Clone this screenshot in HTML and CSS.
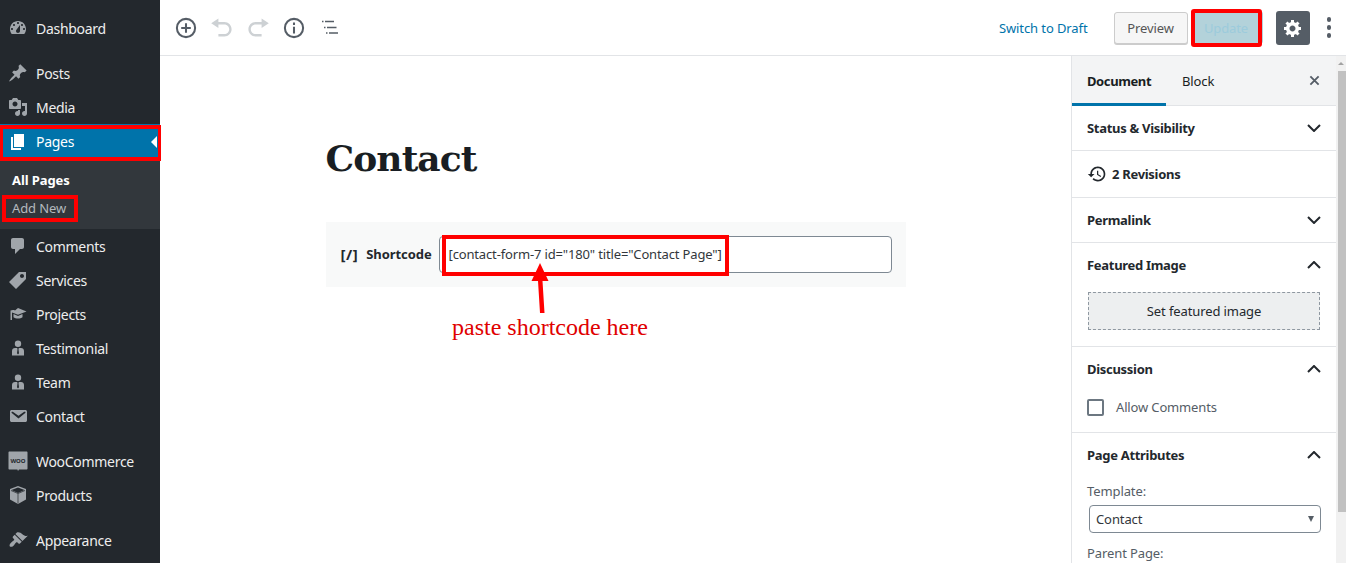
FILE: index.html
```html
<!DOCTYPE html>
<html lang="en">
<head>
<meta charset="utf-8">
<title>Edit Page: Contact</title>
<link rel="stylesheet" href="styles.css">
</head>
<body>
<div class="app">
  <nav class="side">
    <a class="item"><svg class="ic" viewBox="0 0 20 20"><path fill-rule="evenodd" d="M3.76 16h12.48c1.1-1.37 1.76-3.11 1.76-5 0-4.42-3.58-8-8-8s-8 3.58-8 8c0 1.89.66 3.63 1.76 5zM10 4c.55 0 1 .45 1 1s-.45 1-1 1-1-.45-1-1 .45-1 1-1zM6 6c.55 0 1 .45 1 1s-.45 1-1 1-1-.45-1-1 .45-1 1-1zm8 0c.55 0 1 .45 1 1s-.45 1-1 1-1-.45-1-1 .45-1 1-1zm-5.37 5.55L12 7v6c0 1.1-.9 2-2 2s-2-.9-2-2c0-.57.24-1.08.63-1.45zM4 10c.55 0 1 .45 1 1s-.45 1-1 1-1-.45-1-1 .45-1 1-1zm12 0c.55 0 1 .45 1 1s-.45 1-1 1-1-.45-1-1 .45-1 1-1z"/></svg><span>Dashboard</span></a>
    <div class="sep"></div>
    <a class="item"><svg class="ic" viewBox="0 0 20 20"><path d="M10.44 3.02l1.82-1.82 6.36 6.35-1.83 1.82c-1.05-.68-2.48-.57-3.41.36l-.75.75c-.92.93-1.04 2.35-.35 3.41l-1.83 1.82-2.41-2.41-2.8 2.79c-.42.42-3.38 2.71-3.8 2.29s1.86-3.39 2.28-3.81l2.79-2.79L4.1 9.36l1.83-1.82c1.05.69 2.48.57 3.4-.36l.75-.75c.93-.92 1.05-2.35.36-3.41z"/></svg><span>Posts</span></a>
    <a class="item"><svg class="ic" viewBox="0 0 20 20"><path fill-rule="evenodd" d="M13 11V4c0-.55-.45-1-1-1h-1.67L9 1H5L3.67 3H2c-.55 0-1 .45-1 1v7c0 .55.45 1 1 1h10c.55 0 1-.45 1-1zM7 4.5c1.38 0 2.5 1.12 2.5 2.5S8.38 9.5 7 9.5 4.5 8.38 4.5 7 5.62 4.5 7 4.5zM14 6h5v10.5c0 1.38-1.12 2.5-2.5 2.5S14 17.88 14 16.5s1.12-2.5 2.5-2.5c.17 0 .34.02.5.05V9h-3V6zm-4 8.05V13h2v3.5c0 1.38-1.12 2.5-2.5 2.5S7 17.88 7 16.5 8.12 14 9.5 14c.17 0 .34.02.5.05z"/></svg><span>Media</span></a>
    <a class="item current"><svg class="ic" viewBox="0 0 20 20"><path d="M6 15V2h10v13H6zm-1 1h8v2H3V5h2v11z"/></svg><span>Pages</span><i class="notch"></i></a>
    <div class="sub">
      <a class="subitem strong">All Pages</a>
      <a class="subitem">Add New</a>
    </div>
    <a class="item"><svg class="ic" viewBox="0 0 20 20"><path d="M5 2h9c1.1 0 2 .9 2 2v7c0 1.1-.9 2-2 2h-2l-5 5v-5H5c-1.1 0-2-.9-2-2V4c0-1.1.9-2 2-2z"/></svg><span>Comments</span></a>
    <a class="item"><svg class="ic" viewBox="0 0 20 20"><path fill-rule="evenodd" d="M11 2h7v7L8 19l-7-7zm3 6c1.1 0 2-.9 2-2s-.9-2-2-2-2 .9-2 2 .9 2 2 2z"/></svg><span>Services</span></a>
    <a class="item"><svg class="ic" viewBox="0 0 20 20"><path d="M10 4l8.5 3.4L10 10.8 4 8.4V16H2.5V6.6c1.5-.8 3.300-.6 4.500-.2zM5.500 10l4.500 1.900 4.500-1.900v3.300c-2 1.700-7 1.700-9 0z"/></svg><span>Projects</span></a>
    <a class="item"><svg class="ic" viewBox="0 0 20 20"><path fill-rule="evenodd" d="M10 2.500a3.200 3.200 0 1 1 0 6.400 3.200 3.200 0 0 1 0-6.400zM7 10h6c1.800 0 3 1.300 3 3v4.500H4V13c0-1.700 1.200-3 3-3zM9.200 10l.3 1.200-.5 4 1 1.400 1-1.400-.5-4 .3-1.200z"/></svg><span>Testimonial</span></a>
    <a class="item"><svg class="ic" viewBox="0 0 20 20"><path fill-rule="evenodd" d="M10 2.500a3.200 3.200 0 1 1 0 6.400 3.200 3.200 0 0 1 0-6.400zM7 10h6c1.800 0 3 1.300 3 3v4.500H4V13c0-1.700 1.200-3 3-3zM9.200 10l.3 1.200-.5 4 1 1.400 1-1.400-.5-4 .3-1.200z"/></svg><span>Team</span></a>
    <a class="item"><svg class="ic" viewBox="0 0 20 20"><path d="M3.870 4h13.250C18.370 4 19 4.590 19 5.790v8.420c0 1.190-.63 1.790-1.880 1.790H3.870c-1.250 0-1.880-.6-1.880-1.790V5.790c0-1.200.63-1.790 1.880-1.790zm6.620 8.600l6.740-5.530c.24-.2.43-.66.13-1.070-.29-.41-.82-.42-1.170-.17l-5.700 3.860L4.800 5.830c-.35-.25-.88-.24-1.170.17-.3.41-.11.87.13 1.070z"/></svg><span>Contact</span></a>
    <div class="sep"></div>
    <a class="item"><svg class="ic woo" viewBox="0 0 20 20"><path d="M1.500 .5h17c.6 0 1 .4 1 1v16c0 .6-.4 1-1 1h-7.500l-1 1.500-.6-1.500H1.500c-.6 0-1-.4-1-1v-16c0-.6.4-1 1-1z"/><text class="wootext" x="10" y="11.500">WOO</text></svg><span>WooCommerce</span></a>
    <a class="item"><svg class="ic" viewBox="0 0 20 20"><path d="M10 1l8 3v10.500L10 19l-8-4.500V4zM3.500 5l6.500 3 6.500-3L10 2.600z"/><path class="boxline" d="M3 5.500l7 3 7-3M10 8.500v10"/></svg><span>Products</span></a>
    <div class="sep"></div>
    <a class="item"><svg class="ic" viewBox="0 0 20 20"><path d="M14.480 11.060L7.410 3.990l1.500-1.500c.5-.56 2.300-.47 3.510.32 1.210.8 1.430 1.280 2.910 2.100 1.180.64 2.450 1.260 4.450.85zm-.71.710L6.700 4.700 4.930 6.470c-.39.39-.39 1.020 0 1.410l1.060 1.060c.39.39.39 1.030 0 1.420-.6.6-1.430 1.110-2.210 1.690-.35.26-.7.53-1.010.84-1.430 1.430-1.400 2.970-.82 3.570.58.58 2.130.61 3.560-.82.31-.31.58-.66.84-1.010.58-.78 1.090-1.610 1.690-2.210.39-.39 1.030-.39 1.420 0l1.060 1.060c.39.39 1.020.39 1.410 0z"/></svg><span>Appearance</span></a>
  </nav>

  <div class="main">
    <header class="top">
      <div class="tools">
        <svg class="tool plus" viewBox="0 0 20 20"><circle cx="10" cy="10" r="7.600"/><path d="M10 6v8M6 10h8"/></svg>
        <svg class="tool dim" viewBox="0 0 20 20"><path d="M12 5H7V2L1 6l6 4V7h5c2.200 0 4 1.800 4 4s-1.800 4-4 4H7v2h5c3.300 0 6-2.700 6-6s-2.700-6-6-6z"/></svg>
        <svg class="tool dim" viewBox="0 0 20 20"><path d="M8 5h5V2l6 4-6 4V7H8c-2.200 0-4 1.800-4 4s1.800 4 4 4h5v2H8c-3.300 0-6-2.700-6-6s2.700-6 6-6z"/></svg>
        <svg class="tool plus" viewBox="0 0 20 20"><circle cx="10" cy="10" r="7.600"/><path d="M10 9v5.500M10 5.500v2"/></svg>
        <svg class="tool toc" viewBox="0 0 20 20"><path d="M3 3.500h1.500M6 3.500h9M5 9.500h1.500M8 9.500h9.500M7 15h1.500M10 15h9"/></svg>
      </div>
      <a class="draft">Switch to Draft</a>
      <button class="btn preview">Preview</button>
      <button class="btn update">Update</button>
      <button class="gear"><svg viewBox="0 0 20 20"><path fill-rule="evenodd" d="M18 12h-2.180c-.17.7-.44 1.350-.81 1.930l1.540 1.540-2.100 2.100-1.540-1.540c-.58.36-1.230.63-1.910.79V19H8v-2.180c-.68-.16-1.330-.43-1.910-.79l-1.540 1.540-2.120-2.120 1.540-1.540c-.36-.58-.63-1.230-.79-1.910H1V9.030h2.170c.16-.7.44-1.350.8-1.940L2.430 5.550l2.100-2.100 1.540 1.540c.58-.37 1.240-.64 1.930-.81V2h3v2.180c.68.16 1.330.43 1.910.79l1.540-1.540 2.120 2.120-1.540 1.540c.36.59.64 1.240.8 1.940H18V12zm-8.500 1.500c1.660 0 3-1.340 3-3s-1.340-3-3-3-3 1.340-3 3 1.340 3 3 3z"/></svg></button>
      <div class="more"><i></i><i></i><i></i></div>
    </header>
    <div class="body">
      <main class="editor">
        <h1 class="title">Contact</h1>
        <div class="block">
          <div class="blocklabel"><b class="bracket">[/]</b><b>Shortcode</b></div>
          <div class="field">[contact-form-7 id="180" title="Contact Page"]</div>
        </div>
      </main>
      <aside class="panel">
        <div class="tabs">
          <a class="tab on">Document</a>
          <a class="tab">Block</a>
          <svg class="close" viewBox="0 0 12 12"><path d="M1.500 1.500l9 9M10.500 1.500l-9 9"/></svg>
        </div>
        <section class="row status"><h2>Status &amp; Visibility</h2><svg class="chev" viewBox="0 0 14 8"><path d="M1 1l6 6 6-6"/></svg></section>
        <section class="row rev"><svg class="hist" viewBox="0 0 24 24"><path d="M13 3c-4.970 0-9 4.030-9 9H1l3.890 3.890.07.14L9 12H6c0-3.870 3.130-7 7-7s7 3.130 7 7-3.130 7-7 7c-1.930 0-3.680-.79-4.940-2.060l-1.420 1.420C8.270 19.990 10.510 21 13 21c4.970 0 9-4.030 9-9s-4.030-9-9-9zm-1 5v5l4.280 2.540.72-1.210-3.500-2.080V8H12z"/></svg><h2>2 Revisions</h2></section>
        <section class="row perma"><h2>Permalink</h2><svg class="chev" viewBox="0 0 14 8"><path d="M1 1l6 6 6-6"/></svg></section>
        <section class="group feat">
          <div class="ghead"><h2>Featured Image</h2><svg class="chev" viewBox="0 0 14 8"><path d="M1 7l6-6 6 6"/></svg></div>
          <button class="setimg">Set featured image</button>
        </section>
        <section class="group disc">
          <div class="ghead"><h2>Discussion</h2><svg class="chev" viewBox="0 0 14 8"><path d="M1 7l6-6 6 6"/></svg></div>
          <label class="check"><i class="box"></i><span>Allow Comments</span></label>
        </section>
        <section class="group attr">
          <div class="ghead"><h2>Page Attributes</h2><svg class="chev" viewBox="0 0 14 8"><path d="M1 7l6-6 6 6"/></svg></div>
          <div class="lbl">Template:</div>
          <div class="select"><span>Contact</span><i class="caret"></i></div>
          <div class="lbl parent">Parent Page:</div>
        </section>
      </aside>
      <div class="scroll"><i class="up"></i><i class="thumb"></i></div>
    </div>
  </div>
</div>

<div class="mark m-pages"></div>
<div class="mark m-add"></div>
<div class="mark m-update"></div>
<div class="mark m-field"></div>
<svg class="arrow" viewBox="0 0 40 60"><path d="M19 6l8.500 18h-6l2 32h-4.500L17 24h-6.500z"/></svg>
<div class="note">paste shortcode here</div>
</body>
</html>
```
FILE: styles.css
```css
* { box-sizing: border-box; }
html, body { margin: 0; height: 563px; overflow: hidden; background: #fff; }
body { font-family: "Noto Sans", sans-serif; font-size: 13px; color: #191e23; position: relative; }
h1, h2 { margin: 0; }
.app { display: grid; grid-template-columns: 160px 1fr; height: 563px; }

.side { background: #23282d; padding-top: 11px; overflow: hidden; }
.sep { height: 11px; }
.item { display: flex; align-items: center; height: 34px; color: #eee; font-size: 14px; letter-spacing: -.3px; }
.item span { margin-left: 8px; }
.ic { width: 20px; height: 20px; margin-left: 8px; fill: #a0a5aa; flex: none; }
.woo { margin-left: 8px; }
.wootext { font-family: "Noto Sans", sans-serif; font-size: 6px; font-weight: 700; fill: #23282d; text-anchor: middle; letter-spacing: 0; }
.boxline { fill: none; stroke: #23282d; stroke-width: .7; }
.current { background: #0073aa; color: #fff; height: 35px; position: relative; }
.current .ic { fill: #fff; }
.notch { position: absolute; right: 3px; top: 12px; border: 6px solid transparent; border-right-color: #fff; border-left-width: 0; }
.sub { background: #32373c; height: 70px; padding-top: 7px; }
.subitem { display: flex; align-items: center; height: 28px; padding-left: 12px; color: #b4b9be; font-size: 13px; letter-spacing: -.1px; }
.strong { color: #fff; font-weight: 700; }

.main { display: flex; flex-direction: column; min-width: 0; }
.top { height: 56px; border-bottom: 1px solid #e2e4e7; display: flex; align-items: center; flex: none; }
.tools { display: flex; align-items: center; gap: 12px; margin-left: 14px; margin-right: auto; }
.tool { width: 24px; height: 24px; }
.plus { fill: none; stroke: #555d66; stroke-width: 1.700; }
.dim { fill: #cdd1d4; }
.toc { fill: none; stroke: #555d66; stroke-width: 1.400; width: 20px; height: 20px; margin-left: 1px; }
.draft { color: #0073aa; font-size: 13px; letter-spacing: -.1px; margin-right: 26px; }
.btn { font-family: inherit; font-size: 13px; letter-spacing: -.1px; border-radius: 3px; height: 32px; margin: 0; padding: 0; }
.preview { width: 74px; background: #f6f6f6; color: #555; border: 1px solid #ccc; box-shadow: 0 1px 0 #ccc; margin-right: 5px; }
.update { width: 70px; background: #b3d2da; color: #9ccbdc; border: 1px solid #b3d2da; margin-right: 13px; height: 33px; padding-right: 3px; }
.gear { width: 34px; height: 34px; background: #555d66; border: 0; border-radius: 3px; display: flex; align-items: center; justify-content: center; padding: 0; margin-right: 17px; }
.gear svg { width: 20px; height: 20px; fill: #fff; }
.more { display: flex; flex-direction: column; gap: 3.500px; margin-right: 15px; }
.more i { width: 4.500px; height: 4.500px; border-radius: 50%; background: #555d66; display: block; }

.body { flex: 1; display: flex; min-height: 0; }
.editor { flex: 1; min-width: 0; }
.title { width: 580px; margin: 78px auto 0; font-family: "DejaVu Serif", serif; font-weight: 700; font-size: 36px; line-height: 48px; letter-spacing: -.9px; color: #191e23; }
.block { width: 580px; height: 65px; margin: 40px auto 0; background: #f8f9f9; display: flex; align-items: center; padding: 0 14px 0 15px; }
.blocklabel { display: flex; align-items: center; gap: 8px; width: 98px; font-size: 13px; letter-spacing: -.05px; color: #23282d; padding-bottom: 2px; }
.bracket { font-size: 15px; letter-spacing: .5px; }
.field { flex: 1; height: 37px; background: #fff; border: 1px solid #7e8993; border-radius: 4px; display: flex; align-items: center; padding: 0 0 2px 9px; font-size: 13px; letter-spacing: -.15px; white-space: nowrap; color: #32373c; }

.panel { width: 265px; border-left: 1px solid #e2e4e7; flex: none; overflow: hidden; }
.tabs { height: 50px; background: #f3f4f5; display: flex; align-items: center; border-bottom: 1px solid #e2e4e7; position: relative; }
.tab { height: 50px; display: flex; align-items: center; font-size: 13px; letter-spacing: -.1px; color: #191e23; padding: 0 15px; }
.tab.on { font-weight: 700; width: 94px; border-bottom: 3px solid #0073aa; padding-top: 3px; margin-right: 1px; letter-spacing: -.4px; }
.close { width: 11px; height: 11px; margin-left: auto; margin-right: 16px; fill: none; stroke: #555d66; stroke-width: 2; }
.row { display: flex; align-items: center; justify-content: space-between; padding: 0 15px; border-bottom: 1px solid #e2e4e7; }
.status { height: 45px; }
.rev { height: 47px; justify-content: flex-start; }
.perma { height: 45px; }
h2 { font-size: 13px; font-weight: 700; letter-spacing: -.3px; color: #23282d; }
.chev { width: 14px; height: 8px; fill: none; stroke: #23282d; stroke-width: 2; flex: none; }
.hist { width: 20px; height: 20px; margin-right: 5px; fill: #23282d; }
.group { padding: 0 15px; border-bottom: 1px solid #e2e4e7; }
.ghead { height: 44px; display: flex; align-items: center; justify-content: space-between; }
.feat { height: 104px; }
.setimg { display: block; width: 232px; height: 38px; background: #edeff0; border: 1px dashed #8f98a1; padding: 0; font-family: inherit; font-size: 13px; letter-spacing: -.1px; color: #23282d; margin: 5px 0 0 1px; }
.disc { height: 86px; }
.check { display: flex; align-items: center; margin-top: 7px; color: #555d66; font-size: 13px; letter-spacing: -.15px; }
.box { width: 17px; height: 17px; border: 2px solid #6c7781; border-radius: 2px; margin-right: 12px; }
.attr { padding-bottom: 0; border: 0; }
.lbl { color: #555d66; font-size: 13px; letter-spacing: -.1px; line-height: 18px; margin-top: 5px; }
.select { width: 232px; height: 28px; margin: 5px 0 0 2px; border: 1px solid #7e8993; border-radius: 4px; display: flex; align-items: center; justify-content: space-between; padding: 0 6px; color: #32373c; font-size: 13px; letter-spacing: -.1px; }
.caret { border: 3.500px solid transparent; border-top: 6px solid #555d66; border-bottom: 0; }
.lbl.parent { margin-top: 11px; }

.scroll { width: 10px; flex: none; background: #f1f1f1; position: relative; padding: 15px 0 0 2px; }
.scroll .up { position: absolute; left: 2px; top: 6px; border: 3px solid transparent; border-bottom: 3px solid #a3a3a3; border-top: 0; }
.thumb { display: block; width: 8px; height: 441px; background: #c1c1c1; }

.mark { position: absolute; border: 4px solid #f00; pointer-events: none; }
.m-pages { left: 0; top: 125px; width: 161px; height: 36px; border-left-width: 3px; border-right-width: 3px; }
.m-add { left: 2px; top: 195px; width: 76px; height: 27px; }
.m-update { left: 1191px; top: 9px; width: 71px; height: 38px; border-radius: 3px; }
.m-field { left: 442px; top: 235px; width: 287px; height: 41px; }
.arrow { position: absolute; left: 521px; top: 257px; width: 40px; height: 60px; fill: #f00; }
.note { position: absolute; left: 452px; top: 312px; font-family: "Liberation Serif", serif; font-size: 24px; line-height: 30px; color: #e00000; white-space: nowrap; }
```
